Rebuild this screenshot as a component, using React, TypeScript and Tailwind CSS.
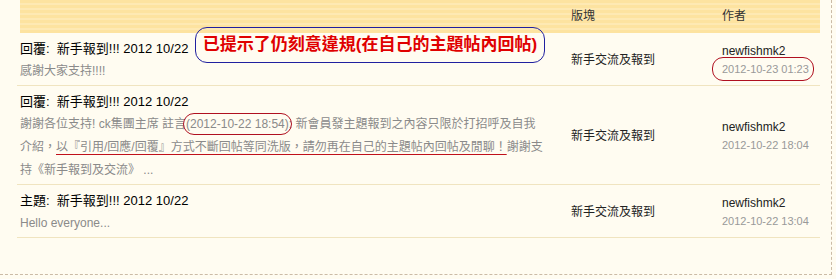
const FONT = "font-['Liberation_Sans','Noto_Sans_CJK_TC',sans-serif]";

type Row = {
  label: string;
  title: string;
  snippet: React.ReactNode;
  forum: string;
  author: string;
  date: string;
  circleDate?: boolean;
};

const rows: Row[] = [
  {
    label: "回覆",
    title: "新手報到!!! 2012 10/22",
    snippet: "感謝大家支持!!!!",
    forum: "新手交流及報到",
    author: "newfishmk2",
    date: "2012-10-23 01:23",
    circleDate: true,
  },
  {
    label: "回覆",
    title: "新手報到!!! 2012 10/22",
    snippet: (
      <>
        謝謝各位支持! ck集團主席 註言
        <span className="relative">
          (2012-10-22 18:54)
          <span className="absolute -left-[3px] -right-[3px] -top-[4px] -bottom-[4px] rounded-[11px] border border-[#b01020]" />
        </span>
        : 新會員發主題報到之內容只限於打招呼及自我
        <br />
        介紹，
        <span className="underline decoration-[#c0101a] underline-offset-[3px]">
          以『引用/回應/回覆』方式不斷回帖等同洗版，請勿再在自己的主題帖內回帖及閒聊！
        </span>
        謝謝支
        <br />
        持《新手報到及交流》 ...
      </>
    ),
    forum: "新手交流及報到",
    author: "newfishmk2",
    date: "2012-10-22 18:04",
  },
  {
    label: "主題",
    title: "新手報到!!! 2012 10/22",
    snippet: "Hello everyone...",
    forum: "新手交流及報到",
    author: "newfishmk2",
    date: "2012-10-22 13:04",
  },
];

export default function App() {
  return (
    <div className={`relative h-[279px] w-[836px] overflow-hidden bg-[#fffcf1] ${FONT}`}>
      <div className="h-[275px] w-[832px] border-b border-r border-dashed border-[#cbbba6]">
        {/* header band */}
        <div className="ml-[20px] grid h-[33px] w-[800px] grid-cols-[551px_151px_1fr] items-center bg-[repeating-linear-gradient(to_bottom,#fde3a0_0px,#fde3a0_3px,#fee9b3_3px,#fee9b3_5px)] pb-[2px] text-[12px] text-[#333]">
          <span />
          <span>版塊</span>
          <span>作者</span>
        </div>

        {rows.map((r, i) => (
          <div
            key={i}
            className="ml-[17px] grid w-[803px] grid-cols-[554px_151px_1fr] items-center border-b border-[#f0e4c0] pt-[4px] pb-[2px]"
          >
            <div className="pl-[3px] leading-[23px]">
              <div className="text-[13px] text-black">
                {r.label}:&nbsp; {r.title}
              </div>
              <div className="text-[12px] text-[#8a8a8a]">{r.snippet}</div>
            </div>
            <div className="text-[12px] text-[#222]">{r.forum}</div>
            <div className="flex flex-col items-start">
              <span className="text-[12px] leading-[18px] text-[#222]">{r.author}</span>
              <span className="relative text-[11px] leading-[18px] text-[#999]">
                {r.date}
                {r.circleDate && (
                  <span className="absolute -left-[10px] -right-[5px] -top-[3px] -bottom-[3px] rounded-[11px] border border-[#b01020]" />
                )}
              </span>
            </div>
          </div>
        ))}
      </div>

      {/* annotation box */}
      <div className="absolute left-[195px] top-[27px] flex h-[36px] w-[350px] items-center justify-center rounded-[12px] border-[1.5px] border-[#2020a0] text-[17px] font-bold text-[#e00000]">
        已提示了仍刻意違規(在自己的主題帖內回帖)
      </div>
    </div>
  );
}
